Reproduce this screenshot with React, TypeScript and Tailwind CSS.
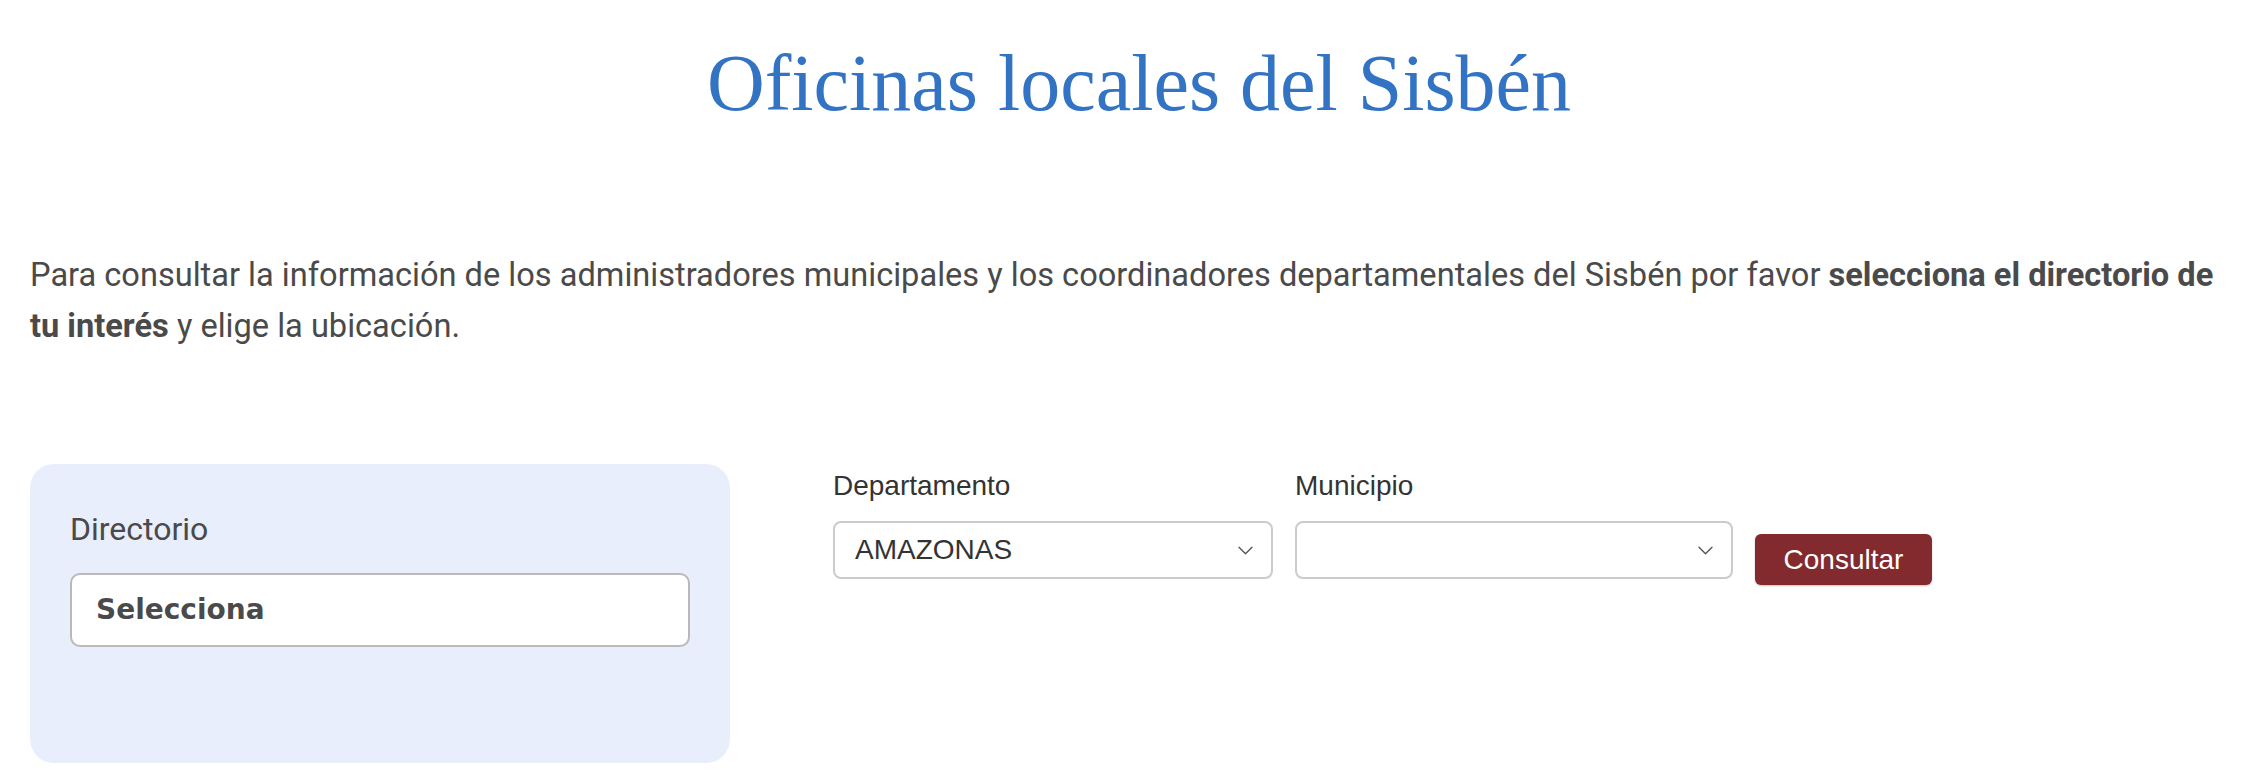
import React from "react";

function Chevron() {
  return (
    <svg width="15" height="9" viewBox="0 0 15 9" fill="none" className="shrink-0">
      <path d="M1 1.2 L7.5 7.7 L14 1.2" stroke="#555555" strokeWidth="1.4" strokeLinecap="round" strokeLinejoin="round" />
    </svg>
  );
}

function SelectBox({ value, width }: { value: string; width: string }) {
  return (
    <div
      className={`${width} h-[58px] mt-[19px] border-2 border-[#cbcbcb] rounded-[8px] bg-white flex items-center justify-between pl-[20px] pr-[18px]`}
    >
      <span className="text-[28px] leading-none text-[#333333] font-['Liberation_Sans',Arial,sans-serif]">{value}</span>
      <Chevron />
    </div>
  );
}

export default function App() {
  return (
    <div className="bg-white w-full px-[30px] pt-[43px] pb-[21px]">
      <h1 className="pl-[18px] text-center text-[80px] leading-none font-normal text-[#3273c4] font-['Liberation_Serif','Times_New_Roman',serif]">
        Oficinas locales del Sisbén
      </h1>

      <p className="mt-[127px] text-[32.6px] leading-[51.2px] text-[#4a4a4a] font-['Roboto','Liberation_Sans',sans-serif]">
        Para consultar la información de los administradores municipales y los coordinadores departamentales del Sisbén por favor{" "}
        <strong className="font-bold">selecciona el directorio de</strong>{" "}
        <strong className="font-bold">tu interés</strong> y elige la ubicación.
      </p>

      <div className="mt-[112px] flex items-start">
        <div className="w-[700px] h-[299px] shrink-0 rounded-[24px] bg-[#e8eefb] px-[40px] pt-[41px]">
          <div className="text-[32px] leading-[48px] font-normal text-[#4a4a4a] font-['Roboto','Liberation_Sans',sans-serif]">
            Directorio
          </div>
          <div className="mt-[20px] h-[74px] border-2 border-[#b9b9b9] rounded-[10px] bg-white flex items-center pl-[24px]">
            <span className="text-[28px] leading-none font-bold text-[#4a4a4a] font-['DejaVu_Sans','Open_Sans',sans-serif]">
              Selecciona
            </span>
          </div>
        </div>

        <div className="ml-[103px] mt-[6px] flex items-start gap-[22px] font-['Liberation_Sans',Arial,sans-serif]">
          <div className="flex flex-col">
            <label className="text-[28px] leading-[32px] text-[#333333]">Departamento</label>
            <SelectBox value="AMAZONAS" width="w-[440px]" />
          </div>
          <div className="flex flex-col">
            <label className="text-[28px] leading-[32px] text-[#333333]">Municipio</label>
            <SelectBox value="" width="w-[438px]" />
          </div>
          <button className="mt-[64px] w-[177px] h-[51px] rounded-[6px] bg-[#822a2e] text-white text-[28px] leading-none shadow-[0_1px_2px_rgba(0,0,0,0.25)] font-['Liberation_Sans',Arial,sans-serif]">
            Consultar
          </button>
        </div>
      </div>
    </div>
  );
}
